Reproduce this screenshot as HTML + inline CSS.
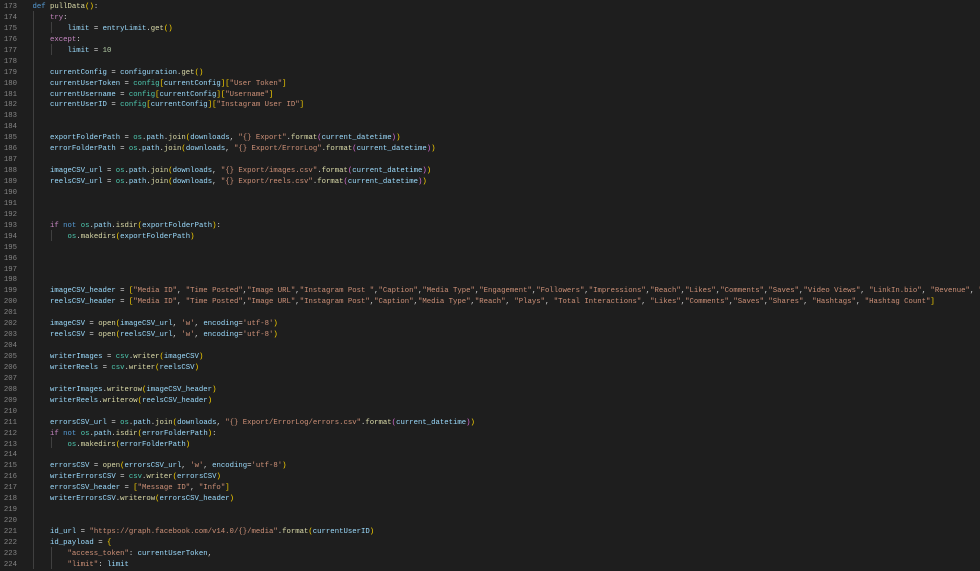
<!DOCTYPE html>
<html><head><meta charset="utf-8"><style>
html,body{margin:0;padding:0;background:#1e1e1e;width:980px;height:570px;overflow:hidden}
.w{position:absolute;left:0;top:2px;font-family:"Liberation Mono",monospace;font-size:7.3px;line-height:10.94px;white-space:pre;color:#d4d4d4}
.n{position:absolute;left:0;top:0;width:17px;text-align:right;color:#858585}
.c{position:absolute;left:32.5px;top:0;width:948px;overflow:hidden}
.g{position:absolute;width:1px;background:#404040}
.k{color:#c586c0}.d{color:#569cd6}.f{color:#dcdcaa}.v{color:#9cdcfe}.s{color:#ce9178}.u{color:#b5cea8}.t{color:#4ec9b0}.b1{color:#ffd700}.b2{color:#da70d6}.b3{color:#179fff}
</style></head><body>
<div class="g" style="left:33px;top:11px;height:558px"></div>
<div class="g" style="left:50.5px;top:22px;height:11px"></div>
<div class="g" style="left:50.5px;top:44px;height:11px"></div>
<div class="g" style="left:50.5px;top:230px;height:11px"></div>
<div class="g" style="left:50.5px;top:437px;height:11px"></div>
<div class="g" style="left:50.5px;top:547px;height:22px"></div>
<div class="w"><div class="n">173
174
175
176
177
178
179
180
181
182
183
184
185
186
187
188
189
190
191
192
193
194
195
196
197
198
199
200
201
202
203
204
205
206
207
208
209
210
211
212
213
214
215
216
217
218
219
220
221
222
223
224</div><div class="c"><span class="d">def</span> <span class="f">pullData</span><span class="b1">()</span>:
    <span class="k">try</span>:
        <span class="v">limit</span> = <span class="v">entryLimit</span>.<span class="f">get</span><span class="b1">()</span>
    <span class="k">except</span>:
        <span class="v">limit</span> = <span class="u">10</span>

    <span class="v">currentConfig</span> = <span class="v">configuration</span>.<span class="f">get</span><span class="b1">()</span>
    <span class="v">currentUserToken</span> = <span class="t">config</span><span class="b1">[</span><span class="v">currentConfig</span><span class="b1">][</span><span class="s">"User Token"</span><span class="b1">]</span>
    <span class="v">currentUsername</span> = <span class="t">config</span><span class="b1">[</span><span class="v">currentConfig</span><span class="b1">][</span><span class="s">"Username"</span><span class="b1">]</span>
    <span class="v">currentUserID</span> = <span class="t">config</span><span class="b1">[</span><span class="v">currentConfig</span><span class="b1">][</span><span class="s">"Instagram User ID"</span><span class="b1">]</span>


    <span class="v">exportFolderPath</span> = <span class="t">os</span>.<span class="v">path</span>.<span class="f">join</span><span class="b1">(</span><span class="v">downloads</span>, <span class="s">"{} Export"</span>.<span class="f">format</span><span class="b2">(</span><span class="v">current_datetime</span><span class="b2">)</span><span class="b1">)</span>
    <span class="v">errorFolderPath</span> = <span class="t">os</span>.<span class="v">path</span>.<span class="f">join</span><span class="b1">(</span><span class="v">downloads</span>, <span class="s">"{} Export/ErrorLog"</span>.<span class="f">format</span><span class="b2">(</span><span class="v">current_datetime</span><span class="b2">)</span><span class="b1">)</span>

    <span class="v">imageCSV_url</span> = <span class="t">os</span>.<span class="v">path</span>.<span class="f">join</span><span class="b1">(</span><span class="v">downloads</span>, <span class="s">"{} Export/images.csv"</span>.<span class="f">format</span><span class="b2">(</span><span class="v">current_datetime</span><span class="b2">)</span><span class="b1">)</span>
    <span class="v">reelsCSV_url</span> = <span class="t">os</span>.<span class="v">path</span>.<span class="f">join</span><span class="b1">(</span><span class="v">downloads</span>, <span class="s">"{} Export/reels.csv"</span>.<span class="f">format</span><span class="b2">(</span><span class="v">current_datetime</span><span class="b2">)</span><span class="b1">)</span>



    <span class="k">if</span> <span class="d">not</span> <span class="t">os</span>.<span class="v">path</span>.<span class="f">isdir</span><span class="b1">(</span><span class="v">exportFolderPath</span><span class="b1">)</span>:
        <span class="t">os</span>.<span class="f">makedirs</span><span class="b1">(</span><span class="v">exportFolderPath</span><span class="b1">)</span>




    <span class="v">imageCSV_header</span> = <span class="b1">[</span><span class="s">"Media ID"</span>, <span class="s">"Time Posted"</span>,<span class="s">"Image URL"</span>,<span class="s">"Instagram Post "</span>,<span class="s">"Caption"</span>,<span class="s">"Media Type"</span>,<span class="s">"Engagement"</span>,<span class="s">"Followers"</span>,<span class="s">"Impressions"</span>,<span class="s">"Reach"</span>,<span class="s">"Likes"</span>,<span class="s">"Comments"</span>,<span class="s">"Saves"</span>,<span class="s">"Video Views"</span>, <span class="s">"LinkIn.bio"</span>, <span class="s">"Revenue"</span>, <span class="s">"Hashtags"</span>
    <span class="v">reelsCSV_header</span> = <span class="b1">[</span><span class="s">"Media ID"</span>, <span class="s">"Time Posted"</span>,<span class="s">"Image URL"</span>,<span class="s">"Instagram Post"</span>,<span class="s">"Caption"</span>,<span class="s">"Media Type"</span>,<span class="s">"Reach"</span>, <span class="s">"Plays"</span>, <span class="s">"Total Interactions"</span>, <span class="s">"Likes"</span>,<span class="s">"Comments"</span>,<span class="s">"Saves"</span>,<span class="s">"Shares"</span>, <span class="s">"Hashtags"</span>, <span class="s">"Hashtag Count"</span><span class="b1">]</span>

    <span class="v">imageCSV</span> = <span class="f">open</span><span class="b1">(</span><span class="v">imageCSV_url</span>, <span class="s">'w'</span>, <span class="v">encoding</span>=<span class="s">'utf-8'</span><span class="b1">)</span>
    <span class="v">reelsCSV</span> = <span class="f">open</span><span class="b1">(</span><span class="v">reelsCSV_url</span>, <span class="s">'w'</span>, <span class="v">encoding</span>=<span class="s">'utf-8'</span><span class="b1">)</span>

    <span class="v">writerImages</span> = <span class="t">csv</span>.<span class="f">writer</span><span class="b1">(</span><span class="v">imageCSV</span><span class="b1">)</span>
    <span class="v">writerReels</span> = <span class="t">csv</span>.<span class="f">writer</span><span class="b1">(</span><span class="v">reelsCSV</span><span class="b1">)</span>

    <span class="v">writerImages</span>.<span class="f">writerow</span><span class="b1">(</span><span class="v">imageCSV_header</span><span class="b1">)</span>
    <span class="v">writerReels</span>.<span class="f">writerow</span><span class="b1">(</span><span class="v">reelsCSV_header</span><span class="b1">)</span>

    <span class="v">errorsCSV_url</span> = <span class="t">os</span>.<span class="v">path</span>.<span class="f">join</span><span class="b1">(</span><span class="v">downloads</span>, <span class="s">"{} Export/ErrorLog/errors.csv"</span>.<span class="f">format</span><span class="b2">(</span><span class="v">current_datetime</span><span class="b2">)</span><span class="b1">)</span>
    <span class="k">if</span> <span class="d">not</span> <span class="t">os</span>.<span class="v">path</span>.<span class="f">isdir</span><span class="b1">(</span><span class="v">errorFolderPath</span><span class="b1">)</span>:
        <span class="t">os</span>.<span class="f">makedirs</span><span class="b1">(</span><span class="v">errorFolderPath</span><span class="b1">)</span>

    <span class="v">errorsCSV</span> = <span class="f">open</span><span class="b1">(</span><span class="v">errorsCSV_url</span>, <span class="s">'w'</span>, <span class="v">encoding</span>=<span class="s">'utf-8'</span><span class="b1">)</span>
    <span class="v">writerErrorsCSV</span> = <span class="t">csv</span>.<span class="f">writer</span><span class="b1">(</span><span class="v">errorsCSV</span><span class="b1">)</span>
    <span class="v">errorsCSV_header</span> = <span class="b1">[</span><span class="s">"Message ID"</span>, <span class="s">"Info"</span><span class="b1">]</span>
    <span class="v">writerErrorsCSV</span>.<span class="f">writerow</span><span class="b1">(</span><span class="v">errorsCSV_header</span><span class="b1">)</span>


    <span class="v">id_url</span> = <span class="s">"https://graph.facebook.com/v14.0/{}/media"</span>.<span class="f">format</span><span class="b1">(</span><span class="v">currentUserID</span><span class="b1">)</span>
    <span class="v">id_payload</span> = <span class="b1">{</span>
        <span class="s">"access_token"</span>: <span class="v">currentUserToken</span>,
        <span class="s">"limit"</span>: <span class="v">limit</span></div></div>
</body></html>
